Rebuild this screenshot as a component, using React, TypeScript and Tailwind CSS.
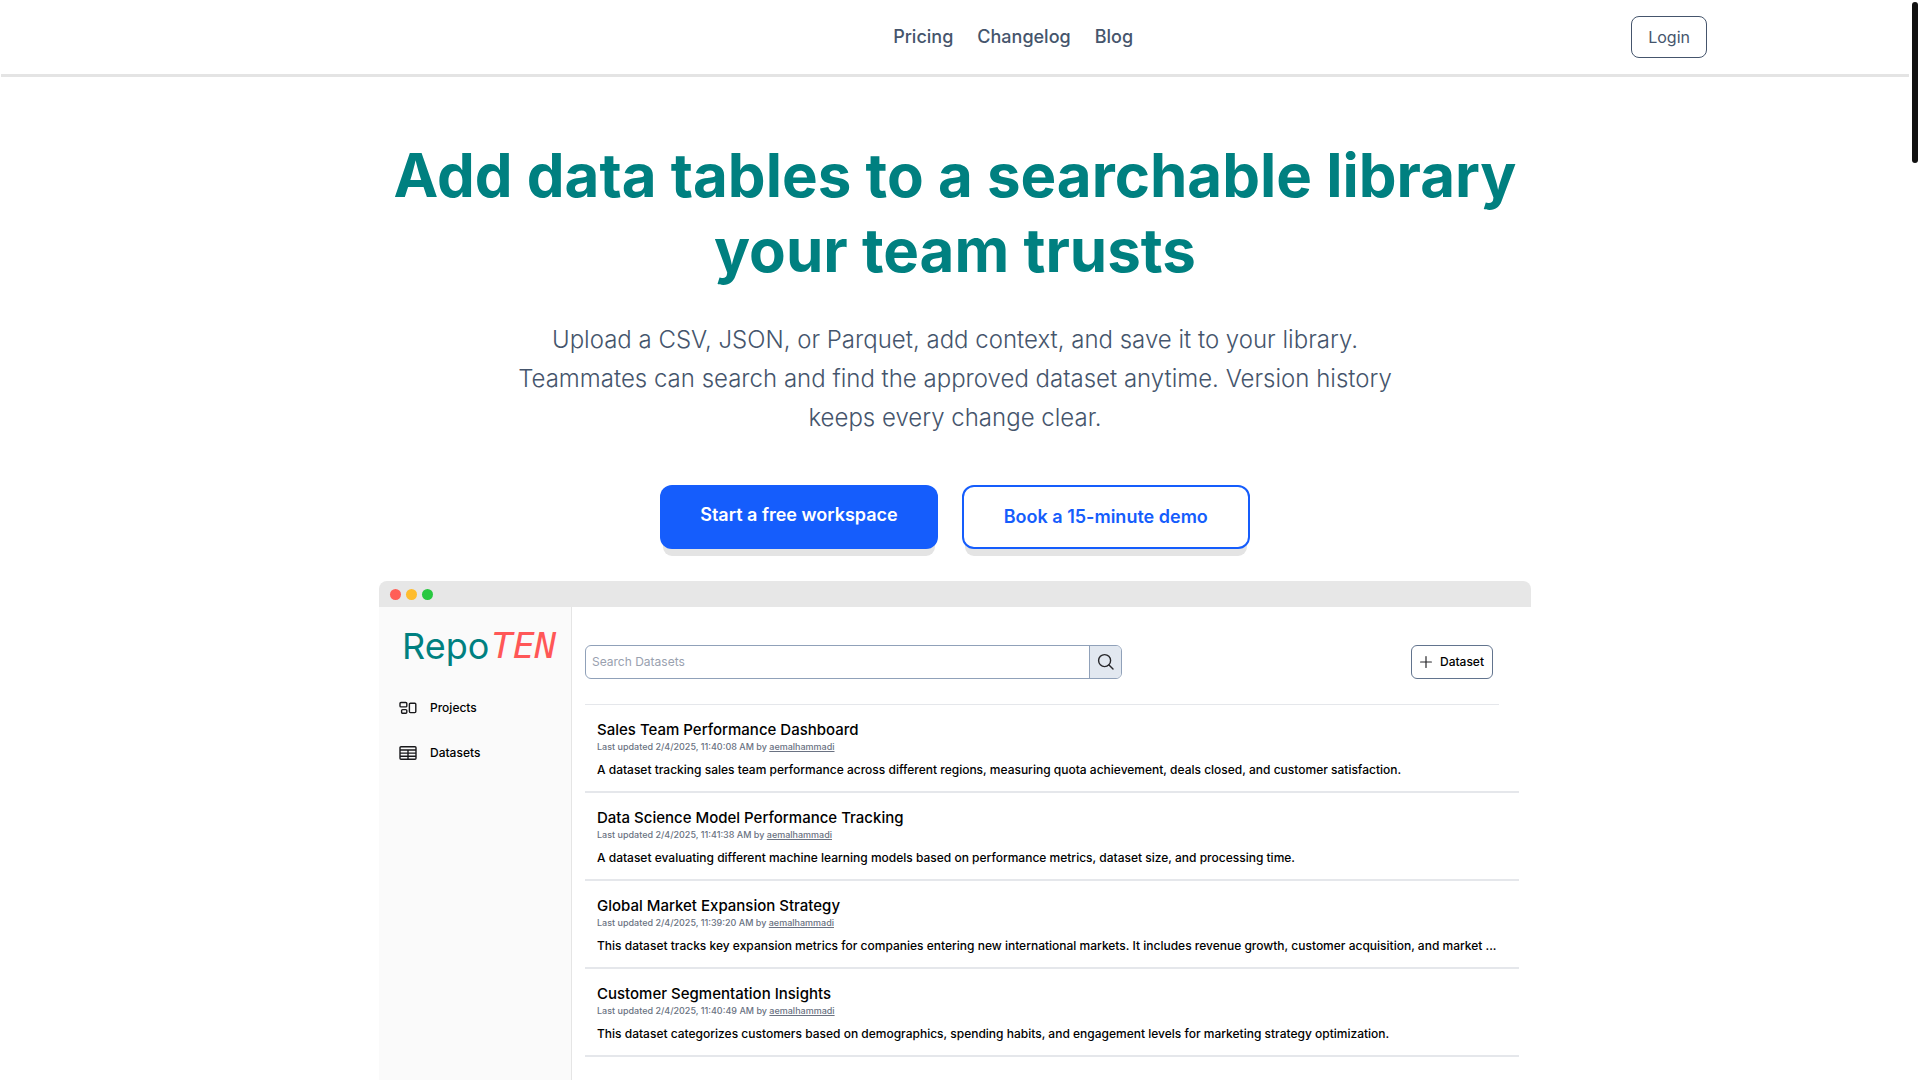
const navLinks = ["Pricing", "Changelog", "Blog"];

const datasets = [
  {
    title: "Sales Team Performance Dashboard",
    updated: "2/4/2025, 11:40:08 AM",
    description:
      "A dataset tracking sales team performance across different regions, measuring quota achievement, deals closed, and customer satisfaction.",
  },
  {
    title: "Data Science Model Performance Tracking",
    updated: "2/4/2025, 11:41:38 AM",
    description:
      "A dataset evaluating different machine learning models based on performance metrics, dataset size, and processing time.",
  },
  {
    title: "Global Market Expansion Strategy",
    updated: "2/4/2025, 11:39:20 AM",
    description:
      "This dataset tracks key expansion metrics for companies entering new international markets. It includes revenue growth, customer acquisition, and market ...",
  },
  {
    title: "Customer Segmentation Insights",
    updated: "2/4/2025, 11:40:49 AM",
    description:
      "This dataset categorizes customers based on demographics, spending habits, and engagement levels for marketing strategy optimization.",
  },
];

function ProjectsIcon() {
  return (
    <svg viewBox="0 0 18 14" className="h-[14px] w-[18px]" fill="none" stroke="#18181b" strokeWidth="1.4" aria-hidden="true">
      <rect x="1" y="1.5" width="6.8" height="4.4" rx="1" />
      <rect x="2.6" y="8.6" width="5.2" height="3.6" rx="1" />
      <rect x="10.4" y="2.2" width="6.4" height="9.4" rx="1" />
    </svg>
  );
}

function TableIcon() {
  return (
    <svg viewBox="0 0 18 14" className="h-[14px] w-[18px]" fill="none" stroke="#18181b" strokeWidth="1.4" aria-hidden="true">
      <rect x="1" y="0.8" width="16" height="12.4" rx="1" />
      <path d="M1 4h16M1 7.1h16M1 10.2h16M9 4v9" />
    </svg>
  );
}

function SearchIcon() {
  return (
    <svg viewBox="0 0 18 18" className="size-[18px]" fill="none" stroke="#27272a" strokeWidth="1.4" strokeLinecap="round" aria-hidden="true">
      <circle cx="7.6" cy="7.6" r="6" />
      <path d="M12 12l4 4" />
    </svg>
  );
}

function PlusIcon() {
  return (
    <svg viewBox="0 0 12 12" className="size-3" stroke="#27272a" strokeWidth="1.2" strokeLinecap="round" aria-hidden="true">
      <path d="M6 0.6v10.8M0.6 6h10.8" />
    </svg>
  );
}

function Header() {
  return (
    <header className="mx-px border-b-[3px] border-[#e4e4e4]">
      <div className="mx-auto flex max-w-[1536px] items-center justify-between px-4 py-4">
        <div className="w-48" />
        <nav className="flex gap-6 text-lg font-medium">
          {navLinks.map((label) => (
            <a key={label} href="#">
              {label}
            </a>
          ))}
        </nav>
        <a href="#" className="rounded-lg border border-slate-600 px-4 py-2">
          Login
        </a>
      </div>
    </header>
  );
}

function Sidebar() {
  return (
    <aside className="w-[193px] shrink-0 border-r border-[#e5e5e5] bg-[#fafafa] pl-5">
      <div className="mt-[15px] flex h-12 items-center gap-0.5 pl-[3px] text-4xl whitespace-nowrap">
        <span className="text-[#008080]">Repo</span>
        <span className="font-['DejaVu_Sans_Mono',monospace] text-[#ff5757] italic">TEN</span>
      </div>
      <nav className="mt-7 flex flex-col gap-[25px] text-xs font-medium text-black">
        <a href="#" className="flex h-5 items-center gap-[13px]">
          <ProjectsIcon />
          Projects
        </a>
        <a href="#" className="flex h-5 items-center gap-[13px]">
          <TableIcon />
          Datasets
        </a>
      </nav>
    </aside>
  );
}

function AppWindow() {
  return (
    <div className="mt-8 w-full max-w-6xl overflow-hidden rounded-t-lg">
      <div className="flex h-[26px] items-center gap-[5px] bg-[#e7e7e7] px-[11px]">
        <span className="size-[11px] rounded-full bg-[#ff5f57]" />
        <span className="size-[11px] rounded-full bg-[#febc2e]" />
        <span className="size-[11px] rounded-full bg-[#28c840]" />
      </div>
      <div className="flex">
        <Sidebar />
        <main className="min-w-0 flex-1 pt-[38px] pr-3 pb-6 pl-[13px] text-black">
          <div className="mr-5 flex items-center justify-between border-b border-gray-200 pr-1.5 pb-[25px]">
            <form className="flex h-[34px] w-[537px] overflow-hidden rounded-md border border-slate-400">
              <input
                type="text"
                aria-label="Search Datasets"
                placeholder="Search Datasets"
                className="min-w-0 flex-1 px-1.5 text-xs placeholder:text-gray-400"
              />
              <button type="button" aria-label="Search" className="flex w-8 items-center justify-center border-l border-slate-400 bg-slate-200">
                <SearchIcon />
              </button>
            </form>
            <button type="button" className="flex h-[34px] items-center gap-2 rounded-md border border-slate-500 px-2 text-xs font-medium">
              <PlusIcon />
              Dataset
            </button>
          </div>
          <ul>
            {datasets.map((d) => (
              <li key={d.title} className="h-[88px] border-b-2 border-gray-200 px-3 pt-4">
                <h2 className="text-[15px] leading-[18px] font-medium">{d.title}</h2>
                <p className="text-[9px] leading-4 font-medium text-gray-500">
                  Last updated {d.updated} by{" "}
                  <a href="#" className="underline">
                    aemalhammadi
                  </a>
                </p>
                <p className="mt-[7px] text-xs leading-4 font-medium">{d.description}</p>
              </li>
            ))}
          </ul>
        </main>
      </div>
    </div>
  );
}

export default function App() {
  return (
    <div className="min-h-screen bg-white pr-[10px] font-['Inter',sans-serif] text-slate-600">
      <Header />
      <section className="flex flex-col items-center px-4 pt-[61px]">
        <h1 className="max-w-6xl text-center text-6xl leading-[75px] font-bold text-[#008080]">
          Add data tables to a searchable library your team trusts
        </h1>
        <p className="mt-8 max-w-4xl text-center text-2xl leading-[39px] font-light">
          Upload a CSV, JSON, or Parquet, add context, and save it to your library. Teammates can search and find the approved dataset anytime. Version history keeps every change clear.
        </p>
        <div className="mt-12 flex gap-6 text-lg font-semibold">
          <a href="#" className="rounded-xl bg-[#155dfc] px-10 py-4 text-white shadow-[0_10px_0_-3px_#e4e4e4]">
            Start a free workspace
          </a>
          <a href="#" className="rounded-xl border-2 border-[#155dfc] bg-white px-10 py-4 text-[#155dfc] shadow-[0_10px_0_-3px_#e4e4e4]">
            Book a 15-minute demo
          </a>
        </div>
        <AppWindow />
      </section>
      <div className="fixed top-0.5 right-0.5 h-[161px] w-1.5 rounded-full bg-[#111111]" aria-hidden="true" />
    </div>
  );
}
